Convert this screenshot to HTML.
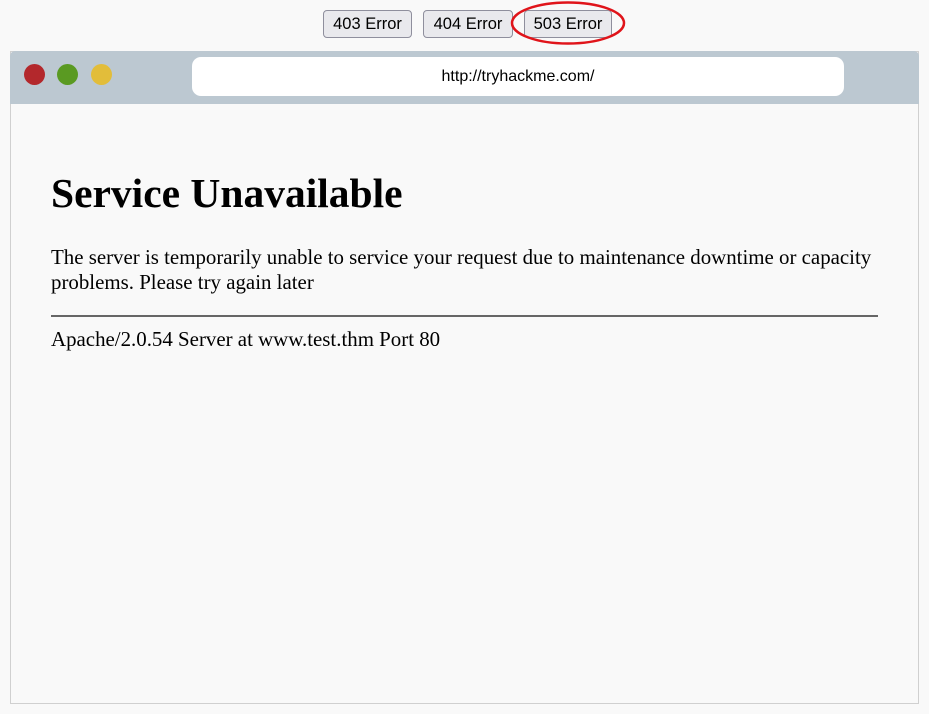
<!DOCTYPE html>
<html><head><style>
body{margin:0;background:#f9f9f9;width:929px;height:714px;position:relative;overflow:hidden}
.btn{position:absolute;top:10px;height:28px;border:1px solid #8f8f9d;border-radius:4px;background:#e9e9ed;font-family:"Liberation Sans",sans-serif;font-size:16.5px;line-height:26px;text-align:center;color:#000;box-sizing:border-box}
.win{position:absolute;left:10px;top:51px;width:909px;height:653px;border:1px solid #d0d0d0;box-sizing:border-box;background:#f9f9f9}
.bar{position:absolute;left:10px;top:51px;width:909px;height:53px;background:#bcc8d1;border-radius:5px 5px 0 0}
.dot{position:absolute;top:64px;width:21px;height:21px;border-radius:50%}
.url{position:absolute;left:192px;top:57px;width:652px;height:39px;background:#fff;border-radius:9px;font-family:"Liberation Sans",sans-serif;font-size:16px;line-height:39px;text-align:center}
.c{position:absolute;left:51px;font-family:"Liberation Serif",serif;color:#000}
</style></head><body>
<div class="btn" style="left:323px;width:89px">403 Error</div>
<div class="btn" style="left:423px;width:90px">404 Error</div>
<div class="btn" style="left:524px;width:88px">503 Error</div>
<svg style="position:absolute;left:510px;top:0" width="118" height="46"><ellipse cx="58" cy="23" rx="56" ry="20.5" fill="none" stroke="#e0141a" stroke-width="2.5"/></svg>
<div class="win"></div>
<div class="bar"></div>
<div class="dot" style="left:24px;background:#b3282c"></div>
<div class="dot" style="left:57px;background:#5a9a22"></div>
<div class="dot" style="left:91px;background:#e2bd3a"></div>
<div class="url">http://tryhackme.com/</div>
<div class="c" style="top:169px;font-size:41.5px;font-weight:bold">Service Unavailable</div>
<div class="c" style="top:245px;font-size:20.9px;line-height:25px;width:840px">The server is temporarily unable to service your request due to maintenance downtime or capacity problems. Please try again later</div>
<div style="position:absolute;left:51px;top:315px;width:827px;height:2px;background:#666"></div>
<div class="c" style="top:327px;font-size:20.9px">Apache/2.0.54 Server at www.test.thm Port 80</div>
</body></html>
